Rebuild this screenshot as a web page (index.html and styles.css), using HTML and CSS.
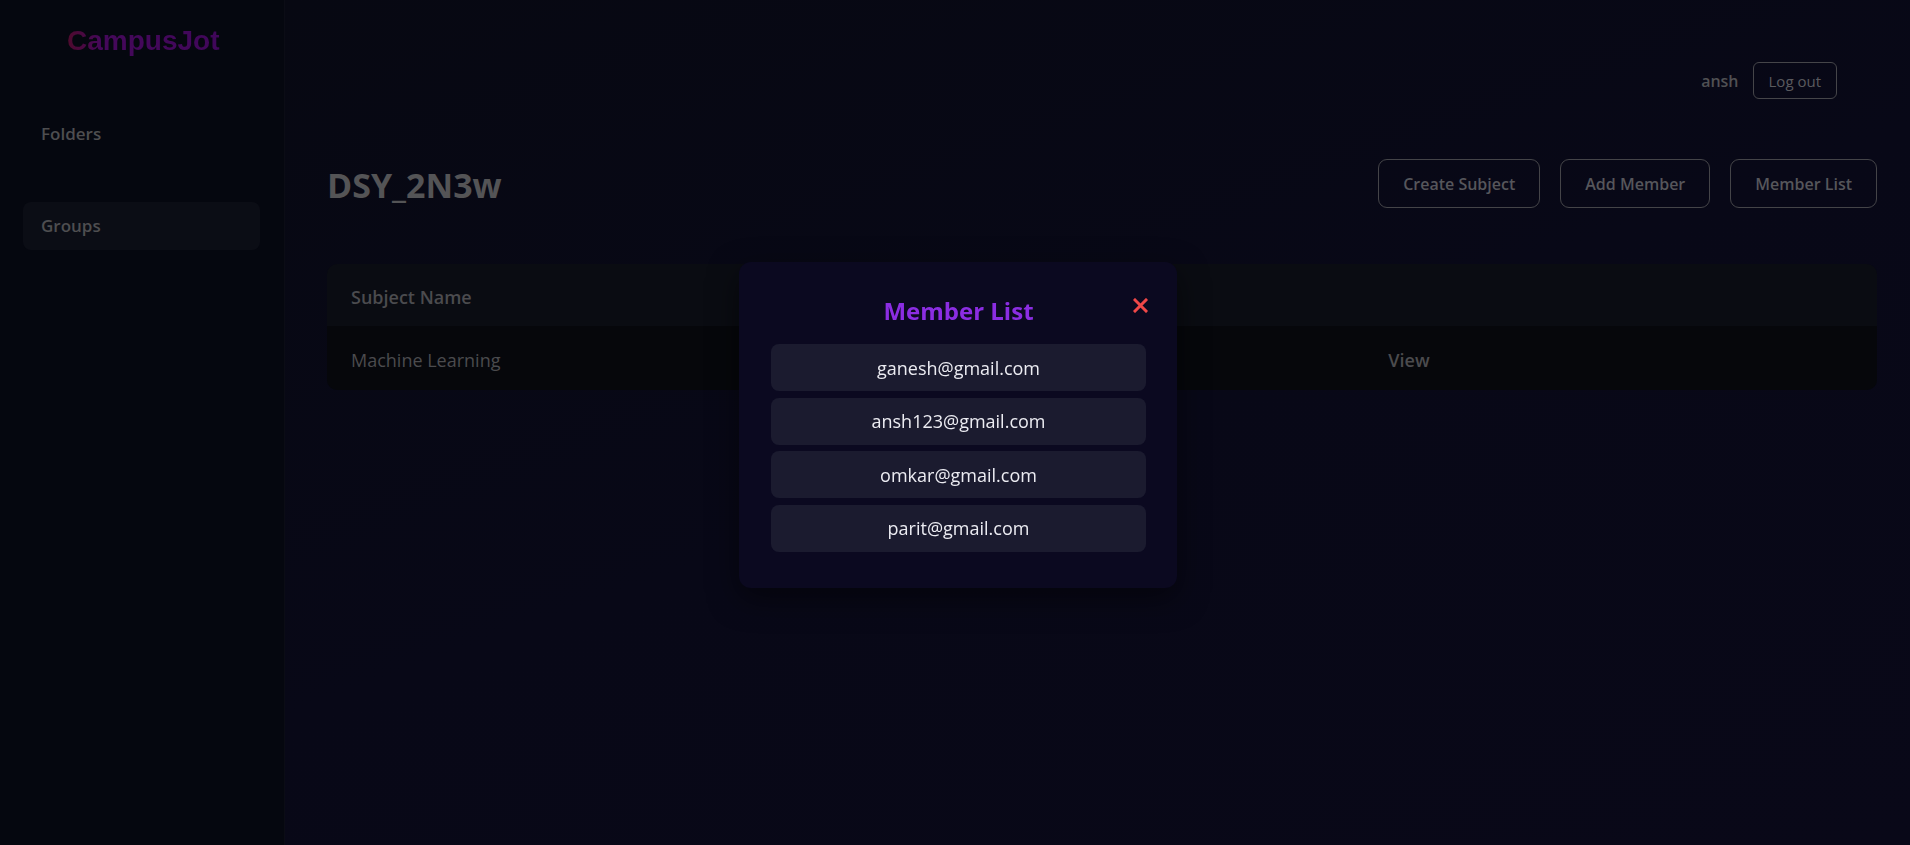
FILE: index.html
```html
<!DOCTYPE html>
<html lang="en">
<head>
<meta charset="utf-8">
<title>CampusJot</title>
<link rel="stylesheet" href="styles.css">
</head>
<body>
<div class="app">
  <aside class="sidebar">
    <div class="logo">CampusJot</div>
    <nav class="nav">
      <a class="nav-item">Folders</a>
      <a class="nav-item active">Groups</a>
    </nav>
  </aside>
  <main class="main">
    <header class="topbar">
      <span class="user">ansh</span>
      <button class="logout">Log out</button>
    </header>
    <section class="title-row">
      <h1 class="group-title">DSY_2N3w</h1>
      <div class="actions">
        <button class="btn">Create Subject</button>
        <button class="btn">Add Member</button>
        <button class="btn">Member List</button>
      </div>
    </section>
    <div class="table">
      <div class="thead">
        <div class="cell">Subject Name</div>
        <div class="cell"></div>
        <div class="cell"></div>
      </div>
      <div class="trow">
        <div class="cell">Machine Learning</div>
        <div class="cell"></div>
        <div class="cell cell-action">View</div>
      </div>
    </div>
  </main>
</div>

<div class="modal">
  <div class="modal-head">
    <h2 class="modal-title">Member List</h2>
    <button class="close" aria-label="Close">
      <svg width="15" height="15" viewBox="0 0 15 15"><path d="M2 2 L13 13 M13 2 L2 13" stroke="#f04848" stroke-width="3" stroke-linecap="square" fill="none"/></svg>
    </button>
  </div>
  <ul class="members">
    <li class="member">ganesh@gmail.com</li>
    <li class="member">ansh123@gmail.com</li>
    <li class="member">omkar@gmail.com</li>
    <li class="member">parit@gmail.com</li>
  </ul>
</div>
</body>
</html>
```

FILE: styles.css
```css
* { box-sizing: border-box; }
html, body { margin: 0; padding: 0; height: 100%; }
body {
  font-family: "Open Sans", "Noto Sans", sans-serif;
  background: #080814;
  color: #4d4d4d;
  overflow: hidden;
}
.app {
  display: flex;
  height: 845px;
}
.sidebar {
  width: 285px;
  flex: none;
  background: #05070f;
  border-right: 1px solid #0b0c15;
  padding: 25px 24px 0 23px;
}
.logo {
  font-family: "Liberation Sans", Arial, sans-serif;
  font-weight: 700;
  font-size: 28px;
  line-height: 32px;
  margin-left: 44px;
  padding-right: 2px;
  background: linear-gradient(90deg, #4e0a2c 0%, #45085a 22%, #40075a 100%);
  -webkit-background-clip: text;
  background-clip: text;
  color: transparent;
  width: max-content;
}
.nav {
  display: flex;
  flex-direction: column;
  gap: 44px;
  margin-top: 53px;
}
.nav-item {
  display: block;
  height: 48px;
  line-height: 48px;
  padding-left: 18px;
  font-size: 17px;
  font-weight: 600;
  color: #4e4e50;
  border-radius: 8px;
}
.nav-item.active { background: #0b0d15; }

.main {
  flex: 1;
  padding: 0 33px 0 42px;
  background: linear-gradient(160deg, #070812 0%, #080817 50%, #090818 100%);
}
.topbar {
  display: flex;
  justify-content: flex-end;
  align-items: center;
  gap: 14px;
  height: 37px;
  margin-top: 62px;
  padding-right: 40px;
}
.user {
  font-size: 16px;
  font-weight: 600;
  color: #505053;
}
.logout {
  font-family: inherit;
  height: 37px;
  padding: 0 15px;
  background: transparent;
  border: 1px solid #454549;
  border-radius: 6px;
  color: #5a5a5e;
  font-size: 15px;
}
.title-row {
  display: flex;
  justify-content: space-between;
  align-items: center;
  margin-top: 60px;
  height: 49px;
}
.group-title {
  margin: 0;
  padding-top: 3px;
  font-size: 34px;
  font-weight: 700;
  color: #545456;
}
.actions { display: flex; gap: 20px; }
.btn {
  font-family: inherit;
  height: 49px;
  padding: 0 24px;
  background: transparent;
  border: 1px solid #444448;
  border-radius: 9px;
  color: #56565b;
  font-size: 16px;
  font-weight: 600;
}
.table {
  margin-top: 56px;
  border-radius: 10px;
  overflow: hidden;
}
.thead, .trow {
  display: grid;
  grid-template-columns: 1fr 1fr 1fr;
  align-items: center;
}
.thead { height: 62px; background: #0a0c12; font-weight: 600; padding-top: 3px; }
.trow { height: 64px; background: #06070b; padding-top: 3px; }
.cell {
  padding: 0 24px;
  font-size: 18px;
  color: #4b4b4e;
}
.cell-action { padding-left: 28px; font-weight: 600; }

.modal {
  position: fixed;
  left: 739px;
  top: 262px;
  width: 438px;
  padding: 22px 31px 36px 32px;
  background: #0b0920;
  border-radius: 12px;
  box-shadow: 0 10px 30px rgba(0,0,0,0.5);
}
.modal-head {
  position: relative;
  display: flex;
  justify-content: center;
  height: 54px;
  align-items: center;
}
.modal-title {
  margin: 0;
  font-size: 24px;
  font-weight: 700;
  color: #8b2de2;
  line-height: 32px;
}
.close {
  position: absolute;
  right: -2px;
  top: 14px;
  padding: 0;
  border: 0;
  background: none;
  width: 15px;
  height: 15px;
  display: flex;
}
.members {
  list-style: none;
  margin: 6px 0 0;
  padding: 0;
  display: flex;
  flex-direction: column;
  gap: 6.5px;
}
.member {
  height: 47px;
  display: flex;
  align-items: center;
  justify-content: center;
  background: #1b1b2f;
  border-radius: 8px;
  color: #ececf2;
  font-size: 18px;
}
```
